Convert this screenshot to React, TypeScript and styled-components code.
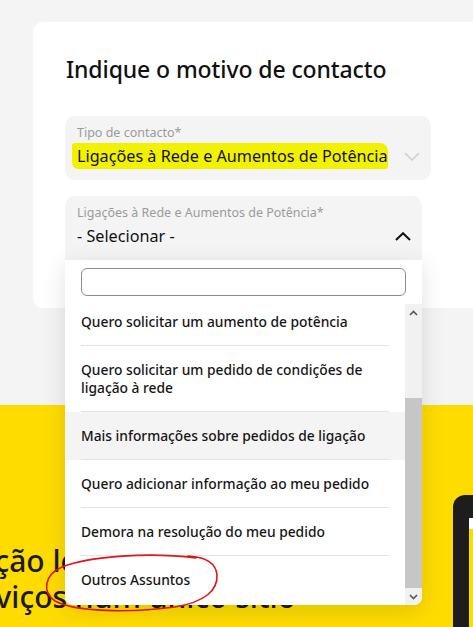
import React from "react";
import styled, { createGlobalStyle } from "styled-components";

const GlobalStyle = createGlobalStyle`
  html, body { margin: 0; padding: 0; }
  body {
    background: #f4f4f4;
    font-family: "Noto Sans", Lato, sans-serif;
    color: #1a1a1a;
  }
  * { box-sizing: border-box; }
`;

const Page = styled.div`
  width: 473px;
  height: 627px;
  overflow: hidden;
  display: flex;
  flex-direction: column;
  position: relative;
`;

const TopArea = styled.section`
  height: 405px;
  flex: none;
  padding: 22px 0 0 33px;
  background: #f4f4f4;
`;

const Card = styled.div`
  width: 470px;
  height: 286px;
  background: #ffffff;
  border-radius: 10px 0 0 10px;
  padding: 32px 0 0 32px;
  position: relative;
  z-index: 2;
`;

const Heading = styled.h1`
  margin: 0 0 32px 1px;
  font-size: 23px;
  line-height: 30px;
  font-weight: 500;
  color: #111;
  letter-spacing: -0.1px;
`;

const FieldStack = styled.div`
  display: flex;
  flex-direction: column;
  gap: 16px;
`;

const FieldWrap = styled.div<{ $w: number }>`
  position: relative;
  width: ${(p) => p.$w}px;
`;

const FieldBox = styled.div<{ $open?: boolean }>`
  height: 64px;
  background: #f4f4f4;
  border-radius: ${(p) => (p.$open ? "10px 10px 0 0" : "10px")};
  padding: 8px 11px 0 12px;
  display: flex;
  align-items: flex-start;
`;

const FieldText = styled.div`
  flex: 1;
  display: flex;
  flex-direction: column;
  min-width: 0;
`;

const Label = styled.span`
  font-size: 12.5px;
  line-height: 17px;
  color: #9b9b9b;
  white-space: nowrap;
`;

const Value = styled.span`
  margin-top: 4px;
  font-size: 16.2px;
  line-height: 22px;
  color: #111;
  white-space: nowrap;
`;

const Marker = styled.mark`
  background: #f2f200;
  color: #111;
  margin-left: -5px;
  padding: 2px 0 2px 5px;
  border-radius: 3px 8px 2px 6px;
`;

const ChevronBox = styled.span`
  margin-top: 24px;
  width: 16px;
  height: 16px;
  flex: none;
  display: flex;
  align-items: center;
  justify-content: center;
`;

const Dropdown = styled.div`
  position: absolute;
  top: 64px;
  left: 0;
  width: 357px;
  height: 345px;
  background: #fff;
  border-radius: 0 0 8px 8px;
  box-shadow: 0 6px 24px rgba(0, 0, 0, 0.12);
  display: flex;
  flex-direction: column;
  z-index: 5;
  overflow: hidden;
`;

const Search = styled.input`
  margin: 8px 16px 0 16px;
  height: 28px;
  flex: none;
  border: 1px solid #8c8c8c;
  border-radius: 6px;
  background: #fff;
  outline: none;
`;

const ListArea = styled.div`
  margin-top: 8px;
  flex: 1;
  display: flex;
  min-height: 0;
`;

const ListViewport = styled.div`
  flex: 1;
  overflow: hidden;
`;

const ListTrack = styled.ul<{ $offset: number }>`
  list-style: none;
  margin: 0;
  padding: 0;
  transform: translateY(${(p) => -p.$offset}px);
`;

const Item = styled.li<{ $active?: boolean }>`
  padding: 0 16px;
  background: ${(p) => (p.$active ? "#f4f4f4" : "#fff")};
`;

const ItemInner = styled.div<{ $last?: boolean }>`
  padding: 15px 0 14px;
  border-bottom: 1px solid ${(p) => (p.$last ? "transparent" : "#e4e4e4")};
  font-size: 13.8px;
  line-height: 18px;
  font-weight: 500;
  color: #161616;
`;

const ScrollBar = styled.div`
  width: 17px;
  flex: none;
  display: flex;
  flex-direction: column;
  background: #f1f1f1;
`;

const ScrollButton = styled.div`
  height: 17px;
  flex: none;
  display: flex;
  align-items: center;
  justify-content: center;
`;

const ScrollTrack = styled.div`
  flex: 1;
  display: flex;
  flex-direction: column;
  padding-top: 77px;
`;

const ScrollThumb = styled.div`
  height: 190px;
  background: #c6c6c6;
`;

const YellowArea = styled.section`
  flex: 1;
  background: #ffdc00;
  display: flex;
  align-items: flex-start;
  position: relative;
`;

const Tagline = styled.div`
  flex: none;
  width: 502px;
  margin: 138px 0 0 -49px;
  font-size: 30px;
  line-height: 36px;
  font-weight: 500;
  color: #1a1a1a;
  white-space: nowrap;
`;

const Device = styled.div`
  flex: none;
  margin-top: 90px;
  width: 60px;
  height: 160px;
  background: #1d1d1d;
  border-radius: 12px 0 0 0;
  padding: 23px 0 0 16px;
  display: flex;
  flex-direction: column;
`;

const DeviceScreen = styled.div`
  flex: 1;
  background: #ffdc00;
  border-top: 11px solid #fff;
`;

const Annotation = styled.svg`
  position: absolute;
  left: 0;
  top: 0;
  pointer-events: none;
  z-index: 10;
`;

const ChevronDown = ({ color }: { color: string }) => (
  <svg width="16" height="9" viewBox="0 0 16 9">
    <path d="M1 1 L8 8 L15 1" fill="none" stroke={color} strokeWidth="1.6" />
  </svg>
);

const ChevronUp = ({ color }: { color: string }) => (
  <svg width="16" height="9" viewBox="0 0 16 9">
    <path d="M1 8 L8 1.2 L15 8" fill="none" stroke={color} strokeWidth="2" />
  </svg>
);

const SmallArrow = ({ up }: { up: boolean }) => (
  <svg width="9" height="6" viewBox="0 0 9 6">
    <path
      d={up ? "M1 5 L4.5 1.5 L8 5" : "M1 1 L4.5 4.5 L8 1"}
      fill="none"
      stroke="#555"
      strokeWidth="1.6"
    />
  </svg>
);

const options = [
  "Quero solicitar um aumento de potência",
  "Quero solicitar um pedido de condições de ligação à rede",
  "Mais informações sobre pedidos de ligação",
  "Quero adicionar informação ao meu pedido",
  "Demora na resolução do meu pedido",
  "Outros Assuntos",
];

export default function App() {
  return (
    <>
      <GlobalStyle />
      <Page>
        <TopArea>
          <Card>
            <Heading>Indique o motivo de contacto</Heading>
            <FieldStack>
              <FieldWrap $w={366}>
                <FieldBox>
                  <FieldText>
                    <Label>Tipo de contacto*</Label>
                    <Value>
                      <Marker>Ligações à Rede e Aumentos de Potência</Marker>
                    </Value>
                  </FieldText>
                  <ChevronBox>
                    <ChevronDown color="#cfcfcf" />
                  </ChevronBox>
                </FieldBox>
              </FieldWrap>
              <FieldWrap $w={357}>
                <FieldBox $open>
                  <FieldText>
                    <Label>Ligações à Rede e Aumentos de Potência*</Label>
                    <Value>- Selecionar -</Value>
                  </FieldText>
                  <ChevronBox>
                    <ChevronUp color="#111" />
                  </ChevronBox>
                </FieldBox>
                <Dropdown>
                  <Search type="text" aria-label="Pesquisar" />
                  <ListArea>
                    <ListViewport>
                      <ListTrack $offset={6}>
                        {options.map((o, i) => (
                          <Item key={o} $active={i === 2}>
                            <ItemInner $last={i === options.length - 1}>{o}</ItemInner>
                          </Item>
                        ))}
                      </ListTrack>
                    </ListViewport>
                    <ScrollBar>
                      <ScrollButton>
                        <SmallArrow up />
                      </ScrollButton>
                      <ScrollTrack>
                        <ScrollThumb />
                      </ScrollTrack>
                      <ScrollButton>
                        <SmallArrow up={false} />
                      </ScrollButton>
                    </ScrollBar>
                  </ListArea>
                </Dropdown>
              </FieldWrap>
            </FieldStack>
          </Card>
        </TopArea>
        <YellowArea>
          <Tagline>
            Edição local e<br />
            serviços num único sítio
          </Tagline>
          <Device>
            <DeviceScreen />
          </Device>
        </YellowArea>
        <Annotation width="473" height="627" viewBox="0 0 473 627">
          <path
            d="M196 558 C 150 552, 90 556, 62 567 C 44 575, 42 592, 55 601 C 75 612, 130 613, 175 607 C 205 602, 218 590, 217 575 C 216 563, 205 557, 188 556"
            fill="none"
            stroke="#e0141a"
            strokeWidth="1.6"
            strokeLinecap="round"
          />
        </Annotation>
      </Page>
    </>
  );
}
